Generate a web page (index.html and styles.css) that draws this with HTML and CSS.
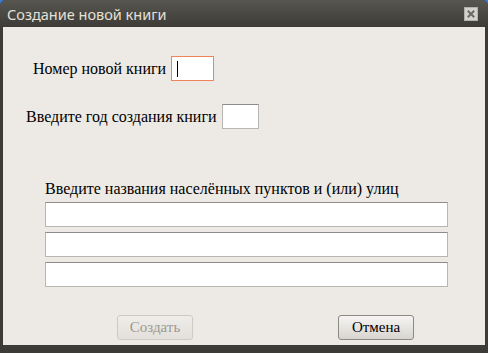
FILE: index.html
```html
<!DOCTYPE html>
<html lang="ru">
<head>
    <meta charset="UTF-8">
    <title>Создание новой книги</title>
    <link rel="stylesheet" href="styles.css">
</head>
<body>
    <div class="window">
        <div class="titlebar">
            <span class="title">Создание новой книги</span>
            <span class="close">
                <svg width="8" height="8" viewBox="0 0 8 8">
                    <path d="M1.5 1.5 L6.5 6.5 M6.5 1.5 L1.5 6.5" stroke="#6a6963" stroke-width="2" stroke-linecap="square"/>
                </svg>
            </span>
        </div>
        <div class="content">
            <div class="row row-number">
                <label>Номер новой книги</label>
                <input type="text" class="input-small focused">
                <span class="caret"></span>
            </div>
            <div class="row row-year">
                <label>Введите год создания книги</label>
                <input type="text" class="input-year">
            </div>
            <div class="places">
                <label>Введите названия населённых пунктов и (или) улиц</label>
                <input type="text" class="input-wide">
                <input type="text" class="input-wide">
                <input type="text" class="input-wide">
            </div>
            <div class="buttons">
                <button class="btn" disabled>Создать</button>
                <button class="btn">Отмена</button>
            </div>
        </div>
    </div>
</body>
</html>
```

FILE: styles.css
```css
html, body {
  margin: 0;
  padding: 0;
  background: #3b7ad0;
}
.window {
  width: 488px;
  height: 353px;
  background: #3c3b37;
  border-radius: 6px 6px 0 0;
  display: flex;
  flex-direction: column;
  overflow: hidden;
}
.titlebar {
  height: 27px;
  background: linear-gradient(#57564f, #3c3b37);
  display: flex;
  align-items: center;
  justify-content: space-between;
  padding: 0 10px 0 7px;
  box-sizing: border-box;
}
.title {
  font-family: "Noto Sans", sans-serif;
  font-size: 14.5px;
  color: #e4e0d8;
  margin-top: 1px;
}
.close {
  width: 12px;
  height: 12px;
  background: #d4d2cd;
  border: 1px solid #b3b1ab;
  display: flex;
  align-items: center;
  justify-content: center;
}
.content {
  margin: 0 3px 8px 3px;
  flex: 1;
  background: #edeae5;
  font-family: "Liberation Serif", serif;
  font-size: 16px;
  color: #000;
  position: relative;
}
.row {
  display: flex;
  align-items: center;
  gap: 5px;
  position: relative;
}
.row-number {
  padding: 29px 0 0 30px;
}
.row-year {
  padding: 23px 0 0 23px;
}
input {
  box-sizing: border-box;
  height: 25px;
  background: #fff;
  border: 1px solid #b8b6b2;
  border-top-color: #8e8c88;
  margin: 0;
  padding: 0;
  font: inherit;
}
.input-small {
  width: 43px;
}
.focused {
  border: 1px solid #f0835a;
}
.caret {
  position: absolute;
  left: 174px;
  top: 34px;
  width: 1px;
  height: 16px;
  background: #000;
}
.input-year {
  width: 37px;
}
.places {
  display: flex;
  flex-direction: column;
  gap: 5px;
  padding: 51px 0 0 42px;
  width: 403px;
}
.places label {
  line-height: 18px;
  margin-bottom: -1px;
}
.input-wide {
  width: 403px;
}
.buttons {
  display: flex;
  justify-content: space-between;
  padding: 28px 0 0 114px;
  width: 297px;
}
.btn {
  width: 76px;
  height: 25px;
  font-family: "Liberation Serif", serif;
  font-size: 15px;
  color: #000;
  border: 1px solid #8d8a84;
  border-radius: 3px;
  background: linear-gradient(#f6f5f3, #d8d5d0);
  padding: 0;
}
.btn:disabled {
  color: #9c9892;
  border-color: #cdcac4;
  background: linear-gradient(#efede9, #e3e0db);
}
```
